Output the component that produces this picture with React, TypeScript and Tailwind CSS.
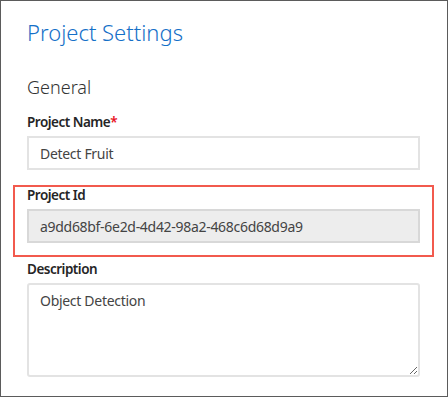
import React from 'react';

export default function App() {
  return (
    <div
      className="w-[448px] h-[397px] border border-[#5b5b5b] bg-white pl-[26px] pr-[27px] overflow-hidden"
      style={{ fontFamily: '"Noto Sans", "Open Sans", sans-serif' }}
    >
      {/* Page title */}
      <h1 className="mt-[15px] text-[22px] leading-[32px] font-light text-[#1570c8]">Project Settings</h1>

      {/* Section heading */}
      <h2 className="mt-[26px] text-[18px] leading-[26px] font-light text-[#333333]">General</h2>

      {/* Project name */}
      <div className="mt-[13px]">
        <label className="block text-[13.5px] leading-[18px] font-semibold tracking-[-0.5px] text-[#252525]">
          Project Name<span className="text-[#e81123]">*</span>
        </label>
        <input
          readOnly
          defaultValue="Detect Fruit"
          className="mt-[5px] block w-full h-[34px] border-2 border-[#e3e3e3] px-[11px] text-[14px] tracking-[-0.3px] text-[#444444] outline-none bg-white"
        />
      </div>

      {/* Project id, highlighted */}
      <div className="mt-[15px] -mx-[14px] border-2 border-[#f25a4e] px-[12px] pb-[12px]">
        <label className="block text-[13.5px] leading-[16px] font-semibold tracking-[-0.5px] text-[#252525]">Project Id</label>
        <input
          readOnly
          defaultValue="a9dd68bf-6e2d-4d42-98a2-468c6d68d9a9"
          className="mt-[6px] block w-full h-[34px] border-2 border-[#d8d8d8] bg-[#ededed] px-[11px] text-[14px] tracking-[-0.3px] text-[#444444] outline-none"
        />
      </div>

      {/* Description */}
      <div className="mt-[3px]">
        <label className="block text-[13.5px] leading-[18px] font-semibold tracking-[-0.5px] text-[#252525]">Description</label>
        <textarea
          readOnly
          defaultValue="Object Detection"
          className="mt-[5px] block w-full h-[94px] rounded-[3px] border-2 border-[#e3e3e3] px-[11px] pt-[6px] text-[14px] leading-[20px] tracking-[-0.3px] text-[#444444] outline-none resize"
        />
      </div>
    </div>
  );
}
